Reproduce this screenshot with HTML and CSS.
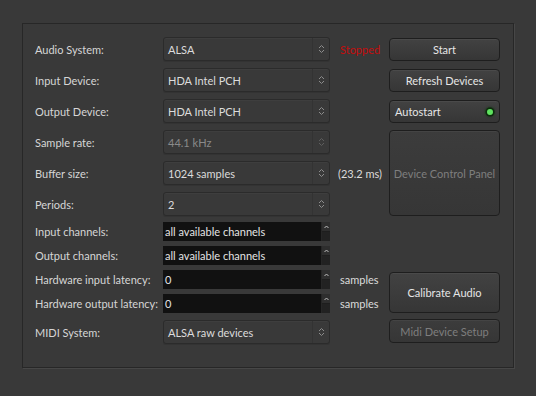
FILE: index.html
```html
<!DOCTYPE html>
<html>
<head>
<meta charset="utf-8">
<link rel="stylesheet" href="styles.css">
</head>
<body>
<div class="frame">
  <div class="grid">
    <div class="label r1">Audio System:</div>
    <div class="combo r1"><span class="val">ALSA</span><span class="arr"><svg width="7" height="10" viewBox="0 0 7 10"><path d="M1 4 L3.5 1.5 L6 4 M1 6 L3.5 8.5 L6 6" fill="none" stroke="#8c8c8c" stroke-width="1"/></svg></span></div>
    <div class="extra r1 stopped">Stopped</div>
    <div class="btn r1 b-start">Start</div>

    <div class="label r2">Input Device:</div>
    <div class="combo r2"><span class="val">HDA Intel PCH</span><span class="arr"><svg width="7" height="10" viewBox="0 0 7 10"><path d="M1 4 L3.5 1.5 L6 4 M1 6 L3.5 8.5 L6 6" fill="none" stroke="#8c8c8c" stroke-width="1"/></svg></span></div>
    <div class="btn r2 b-refresh">Refresh Devices</div>

    <div class="label r3">Output Device:</div>
    <div class="combo r3"><span class="val">HDA Intel PCH</span><span class="arr"><svg width="7" height="10" viewBox="0 0 7 10"><path d="M1 4 L3.5 1.5 L6 4 M1 6 L3.5 8.5 L6 6" fill="none" stroke="#8c8c8c" stroke-width="1"/></svg></span></div>
    <div class="btn r3 b-auto"><span>Autostart</span><span class="led"></span></div>

    <div class="label r4">Sample rate:</div>
    <div class="combo r4 disabled"><span class="val">44.1 kHz</span><span class="arr"><svg width="7" height="10" viewBox="0 0 7 10"><path d="M1 4 L3.5 1.5 L6 4 M1 6 L3.5 8.5 L6 6" fill="none" stroke="#5e5e5e" stroke-width="1"/></svg></span></div>
    <div class="btn r4 b-dcp disabled">Device Control Panel</div>

    <div class="label r5">Buffer size:</div>
    <div class="combo r5"><span class="val">1024 samples</span><span class="arr"><svg width="7" height="10" viewBox="0 0 7 10"><path d="M1 4 L3.5 1.5 L6 4 M1 6 L3.5 8.5 L6 6" fill="none" stroke="#8c8c8c" stroke-width="1"/></svg></span></div>
    <div class="extra r5 ms">(23.2 ms)</div>

    <div class="label r6">Periods:</div>
    <div class="combo r6"><span class="val">2</span><span class="arr"><svg width="7" height="10" viewBox="0 0 7 10"><path d="M1 4 L3.5 1.5 L6 4 M1 6 L3.5 8.5 L6 6" fill="none" stroke="#8c8c8c" stroke-width="1"/></svg></span></div>

    <div class="label r7">Input channels:</div>
    <div class="spin r7"><span class="sval">all available channels</span><span class="sarr"><span class="up"><svg width="5" height="4" viewBox="0 0 5 4"><path d="M0.5 3 L2.5 1 L4.5 3" fill="none" stroke="#bdbdbd" stroke-width="1"/></svg></span><span class="dn"></span></span></div>

    <div class="label r8">Output channels:</div>
    <div class="spin r8"><span class="sval">all available channels</span><span class="sarr"><span class="up"><svg width="5" height="4" viewBox="0 0 5 4"><path d="M0.5 3 L2.5 1 L4.5 3" fill="none" stroke="#bdbdbd" stroke-width="1"/></svg></span><span class="dn"></span></span></div>

    <div class="label r9">Hardware input latency:</div>
    <div class="spin r9"><span class="sval">0</span><span class="sarr"><span class="up"><svg width="5" height="4" viewBox="0 0 5 4"><path d="M0.5 3 L2.5 1 L4.5 3" fill="none" stroke="#bdbdbd" stroke-width="1"/></svg></span><span class="dn"></span></span></div>
    <div class="extra r9 unit">samples</div>
    <div class="btn r9 b-cal">Calibrate Audio</div>

    <div class="label r10">Hardware output latency:</div>
    <div class="spin r10"><span class="sval">0</span><span class="sarr"><span class="up"><svg width="5" height="4" viewBox="0 0 5 4"><path d="M0.5 3 L2.5 1 L4.5 3" fill="none" stroke="#bdbdbd" stroke-width="1"/></svg></span><span class="dn"></span></span></div>
    <div class="extra r10 unit">samples</div>

    <div class="label r11">MIDI System:</div>
    <div class="combo r11"><span class="val">ALSA raw devices</span><span class="arr"><svg width="7" height="10" viewBox="0 0 7 10"><path d="M1 4 L3.5 1.5 L6 4 M1 6 L3.5 8.5 L6 6" fill="none" stroke="#8c8c8c" stroke-width="1"/></svg></span></div>
    <div class="btn r11 b-midi disabled">Midi Device Setup</div>
  </div>
</div>
</body>
</html>
```
FILE: styles.css
```css
html, body {
  margin: 0;
  padding: 0;
  background: #393939;
  width: 536px;
  height: 396px;
  overflow: hidden;
  font-family: "Lato", "Noto Sans", sans-serif;
  font-size: 11px;
  color: #dcdcdc;
}

.frame {
  margin: 23px 0 0 22px;
  width: 465px;
  height: 306px;
  border: 1px solid #272727;
  box-shadow: 1px 1px 0 #474747;
  padding: 13px 13px 24px 12px;
}

.grid {
  display: grid;
  grid-template-columns: 128px 167px 59px 111px;
  grid-template-rows: 31px 31px 31px 31px 31px 30px 24px 24px 24px 26px 24px;
  white-space: nowrap;
}

.r1 { grid-row: 1; }
.r2 { grid-row: 2; }
.r3 { grid-row: 3; }
.r4 { grid-row: 4; }
.r5 { grid-row: 5; }
.r6 { grid-row: 6; }
.r7 { grid-row: 7; }
.r8 { grid-row: 8; }
.r9 { grid-row: 9; }
.r10 { grid-row: 10; }
.r11 { grid-row: 11; }

.label {
  grid-column: 1;
  display: flex;
  align-items: center;
  height: 24px;
  color: #d6d6d6;
}
.r7.label, .r8.label, .r9.label, .r10.label { height: 19px; }

.combo {
  grid-column: 2;
  height: 24px;
  box-sizing: border-box;
  border: 1px solid #2b2b2b;
  border-radius: 3px;
  background: #393939;
  box-shadow: 0 1px 0 #333, inset 0 1px 0 #3e3e3e;
  display: flex;
  align-items: center;
}
.combo .val {
  flex: 1;
  padding-left: 4px;
  color: #dcdcdc;
}
.combo .arr {
  width: 16px;
  height: 22px;
  border-left: 1px solid #333;
  display: flex;
  align-items: center;
  justify-content: center;
}
.combo.disabled .val { color: #8a8a8a; }

.spin {
  grid-column: 2;
  height: 19px;
  box-sizing: border-box;
  background: #111;
  display: flex;
  align-items: stretch;
}
.spin .sval {
  flex: 1;
  padding-left: 2px;
  display: flex;
  align-items: center;
  color: #e4e4e4;
}
.spin .sarr {
  width: 8px;
  display: flex;
  flex-direction: column;
  background: #1a1a1a;
  border-left: 1px solid #262626;
}
.spin .up {
  height: 9px;
  display: flex;
  align-items: center;
  justify-content: center;
  background: #2e2e2e;
  border-bottom: 1px solid #1e1e1e;
}
.spin .dn {
  flex: 1;
  background: #222;
}

.extra {
  grid-column: 3;
  display: flex;
  align-items: center;
  height: 24px;
}
.stopped {
  color: #c40d0d;
  padding-left: 10px;
  font-size: 11px;
}
.ms { padding-left: 8px; }
.unit { padding-left: 10px; height: 19px; }

.btn {
  grid-column: 4;
  box-sizing: border-box;
  height: 23px;
  margin-top: 1px;
  border: 1px solid #1e1e1e;
  border-radius: 4px;
  background: linear-gradient(#424242, #363636);
  box-shadow: inset 0 1px 0 #4a4a4a;
  display: flex;
  align-items: center;
  justify-content: center;
  color: #e6e6e6;
}
.btn.disabled {
  color: #7e7e7e;
  background: linear-gradient(#3c3c3c, #363636);
  box-shadow: inset 0 1px 0 #444;
}
.b-auto {
  justify-content: space-between;
  padding: 0 5px 0 5px;
}
.led {
  width: 6px;
  height: 6px;
  border-radius: 50%;
  background: #5fe35f;
  box-shadow: 0 0 0 1.5px #0d2a0d, 0 0 2px 2px #1c3a1c;
  margin-right: 1px;
}
.b-dcp {
  grid-row: 4 / span 3;
  height: 86px;
  margin-top: 0;
}
.b-cal {
  grid-row: 9 / span 2;
  height: 41px;
  margin-top: 2px;
}
.b-midi {
  height: 24px;
  margin-top: -1px;
}
```
